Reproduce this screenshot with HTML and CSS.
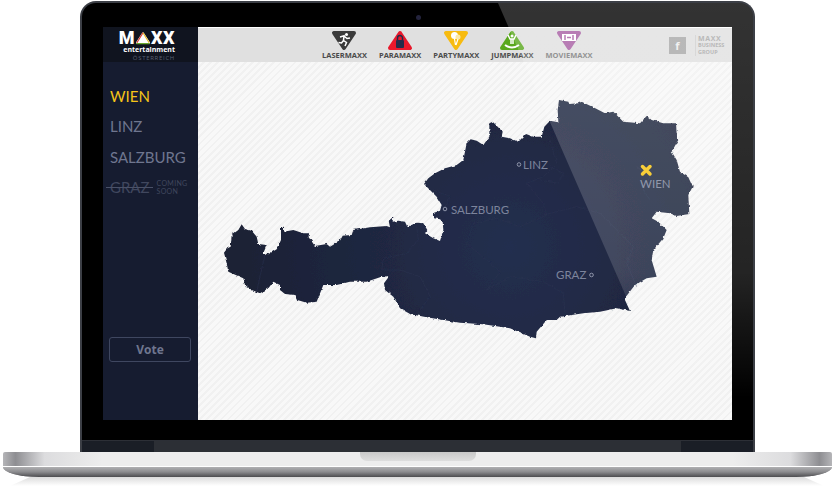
FILE: index.html
```html
<!DOCTYPE html>
<html lang="en">
<head>
    <meta charset="UTF-8">
    <title>MAXX entertainment</title>
    <link rel="stylesheet" href="styles.css">
</head>
<body>
    <div class="lid">
        <span class="camera"></span>
        <div class="screen">
            <aside class="sidebar">
                <div class="logo">
                    <div class="logo-mark">
                        <span>M</span>
                        <svg width="16" height="14" viewBox="0 0 17 14">
                            <polygon points="8.5,2 15,12 2,12" fill="#fff" stroke="#fff" stroke-width="2" stroke-linejoin="round"/>
                            <path d="M2 12 L8.5 1.5" stroke="#d8342c" stroke-width="1.2" fill="none"/>
                            <path d="M8.5 1.5 L15 12" stroke="#e8b820" stroke-width="1.2" fill="none"/>
                            <path d="M1.5 13 H15.5" stroke="#6aa82c" stroke-width="1.2" fill="none"/>
                        </svg>
                        <span>XX</span>
                    </div>
                    <div class="logo-sub">entertainment</div>
                    <div class="logo-country">ÖSTERREICH</div>
                </div>
                <ul class="cities">
                    <li class="city active">WIEN</li>
                    <li class="city">LINZ</li>
                    <li class="city">SALZBURG</li>
                    <li class="city soon">
                        <span class="struck">GRAZ</span>
                        <span class="soon-note">COMING<br>SOON</span>
                    </li>
                </ul>
                <button class="vote">Vote</button>
            </aside>
            <div class="content">
                <header class="topbar">
                    <nav class="brands">
                        <a class="brand">
                            <svg width="26" height="21" viewBox="0 0 26 21">
                                <polygon points="3,3 23,3 13,18" fill="#3b3b3b" stroke="#3b3b3b" stroke-width="4" stroke-linejoin="round"/>
                                <circle cx="15.5" cy="4.5" r="1.5" fill="#fff"/>
                                <path d="M9 7 L13 5.8 L12.5 10.5 L15.5 12.5 L14 16 M12.5 10.5 L10.5 13 L7.5 12.5 M13 6 L16 8.5 L19 8" stroke="#fff" stroke-width="1.5" fill="none"/>
                            </svg>
                            <span>LASERMAXX</span>
                        </a>
                        <a class="brand">
                            <svg width="26" height="21" viewBox="0 0 26 21">
                                <polygon points="13,3 23,18 3,18" fill="#e8192c" stroke="#e8192c" stroke-width="4" stroke-linejoin="round"/>
                                <rect x="9" y="10" width="8" height="8" rx="1" fill="#252c4a"/>
                                <path d="M10.5 10 V8 a2.5 2.5 0 0 1 5 0 V10" stroke="#252c4a" stroke-width="1.5" fill="none"/>
                            </svg>
                            <span>PARAMAXX</span>
                        </a>
                        <a class="brand">
                            <svg width="26" height="21" viewBox="0 0 26 21">
                                <polygon points="3,3 23,3 13,18" fill="#f7bb10" stroke="#f7bb10" stroke-width="4" stroke-linejoin="round"/>
                                <circle cx="11.5" cy="5.5" r="3.5" fill="#fff"/>
                                <circle cx="15" cy="7" r="2.5" fill="#fbe9a8"/>
                                <path d="M11.5 9 L12.5 15 M15 9 L13 15" stroke="#fff" stroke-width="1.2" fill="none"/>
                            </svg>
                            <span>PARTYMAXX</span>
                        </a>
                        <a class="brand">
                            <svg width="26" height="21" viewBox="0 0 26 21">
                                <polygon points="13,3 23,18 3,18" fill="#5aa81e" stroke="#5aa81e" stroke-width="4" stroke-linejoin="round"/>
                                <circle cx="13" cy="6" r="1.5" fill="#fff"/>
                                <path d="M9 5 L11 9 H15 L17 5 M12 9 V14 M14 9 V14" stroke="#fff" stroke-width="1.5" fill="none"/>
                                <path d="M6 15 Q13 20 20 15" stroke="#fff" stroke-width="2" fill="none"/>
                            </svg>
                            <span>JUMPMAXX</span>
                        </a>
                        <a class="brand faded">
                            <svg width="26" height="21" viewBox="0 0 26 21">
                                <polygon points="3,3 23,3 13,18" fill="#a75ea3" stroke="#a75ea3" stroke-width="4" stroke-linejoin="round"/>
                                <rect x="6" y="4" width="14" height="7" fill="#fff"/>
                                <path d="M9 5 V10 M17 5 V10 M11 7.5 H15" stroke="#a75ea3" stroke-width="1.5" fill="none"/>
                            </svg>
                            <span>MOVIEMAXX</span>
                        </a>
                    </nav>
                    <div class="social">f</div>
                    <div class="group">
                        <div class="group-name">MAXX</div>
                        <div>BUSINESS</div>
                        <div>GROUP</div>
                    </div>
                </header>
                <main class="map-area">
                    <svg class="map" width="534" height="358" viewBox="198 62 534 358">
                        <defs>
                            <radialGradient id="land" gradientUnits="userSpaceOnUse" cx="900" cy="470" r="850">
                                <stop offset="0" stop-color="#242f4f"/>
                                <stop offset=".5" stop-color="#1f2740"/>
                                <stop offset="1" stop-color="#1a2034"/>
                            </radialGradient>
                            <filter id="rough" x="-5%" y="-5%" width="110%" height="110%">
                                <feTurbulence type="fractalNoise" baseFrequency=".09" numOctaves="2" seed="4"/>
                                <feDisplacementMap in="SourceGraphic" scale="9" xChannelSelector="R" yChannelSelector="G"/>
                            </filter>
                        </defs>
                        <g transform="translate(210 90) scale(.33333)">
                            <path filter="url(#rough)" fill="url(#land)" d="M42 488 L52 475 62 470 65 435 85 420 95 403 105 417 125 422 140 440 145 462 170 465 160 490 175 493 200 478 213 450 213 412 222 410 222 425 250 420 280 430 298 430 295 440 315 468 350 462 360 470 385 455 395 437 425 435 430 420 480 412 530 408 540 412 536 392 550 380 548 395 565 392 585 395 592 410 620 398 640 400 652 420 645 430 670 445 690 453 700 420 698 395 690 388 672 385 672 368 690 362 695 345 680 320 660 300 642 282 655 265 675 250 705 235 730 228 740 225 760 210 770 160 782 148 800 152 820 165 838 140 838 100 848 95 878 125 875 140 900 145 925 155 948 132 970 140 995 140 1003 110 1020 92 1045 97 1043 60 1047 30 1075 35 1078 42 1105 40 1115 35 1150 52 1185 70 1210 65 1240 95 1290 100 1310 78 1325 90 1360 100 1398 100 1400 130 1405 150 1385 185 1400 210 1410 245 1435 262 1448 290 1435 315 1438 372 1400 378 1380 370 1340 365 1325 385 1345 395 1370 420 1360 445 1330 480 1325 510 1340 560 1310 565 1275 585 1250 617 1245 630 1260 663 1220 655 1170 665 1120 670 1050 680 1040 690 1010 690 980 725 978 745 960 740 900 715 820 703 750 698 700 690 650 682 600 672 570 655 550 620 525 600 522 580 538 558 510 562 470 575 420 575 380 585 340 585 320 635 290 638 262 630 255 615 225 612 210 600 210 585 190 575 175 595 150 610 125 600 105 585 100 565 65 550 55 545 50 520 Z"/>
                            <path filter="url(#rough)" fill="none" stroke="#2a3350" stroke-width="1.500" d="M165 495 L150 560 140 605 M620 410 L625 450 590 490 520 505 515 540 570 540 630 560 660 620 630 660 M670 300 L720 320 700 370 M1020 150 L1040 220 1000 260 950 280 1000 340 1010 375 930 410 860 385 790 400 770 460 830 510 870 545 830 600 900 560 1000 575 1060 610 1065 670 M1000 375 L1100 350 1170 370 1240 440 1270 470 1250 520 1280 590 M1280 230 L1320 260 1300 300 1320 330 M1020 230 L1060 250 1045 280 990 270"/>
                        </g>
                        <circle class="pin" cx="519" cy="164.500" r="1.800"/>
                        <text class="place" x="523" y="169">LINZ</text>
                        <circle class="pin" cx="445" cy="209" r="1.800"/>
                        <text class="place" x="451" y="214">SALZBURG</text>
                        <text class="place" x="556" y="279">GRAZ</text>
                        <circle class="pin" cx="591.500" cy="275" r="1.800"/>
                        <path d="M642.500 166.500 L650 174 M650 166.500 L642.500 174" stroke="#f7c512" stroke-width="3.500" stroke-linecap="round"/>
                        <text class="place" x="640" y="187.500">WIEN</text>
                    </svg>
                </main>
            </div>
        </div>
        <div class="chin"><div class="hinge"></div></div>
        <div class="glare"></div>
    </div>
    <div class="base">
        <div class="notch"></div>
        <div class="base-front"></div>
    </div>
    <div class="reflection"></div>
</body>
</html>
```

FILE: styles.css
```css
body {
    margin: 0;
    background: #fff;
    width: 832px;
    height: 486px;
    overflow: hidden;
    font-family: "Lato", sans-serif;
}

/* laptop lid */
.lid {
    position: relative;
    box-sizing: border-box;
    width: 675px;
    height: 451px;
    margin: 1px 0 0 80px;
    padding-top: 24px;
    background: #000;
    border: 2px solid #3c3f46;
    border-bottom: 0;
    border-radius: 16px 16px 0 0;
    display: flex;
    flex-direction: column;
    align-items: center;
    overflow: hidden;
}

.camera {
    position: absolute;
    top: 12px;
    left: 334px;
    width: 5px;
    height: 5px;
    border-radius: 50%;
    background: #23233c;
}

.screen {
    display: flex;
    width: 629px;
    height: 393px;
    background: #f5f5f5;
}

.chin {
    margin-top: 20px;
    flex: 1;
    width: 100%;
    background: #1a1e26;
    border-top: 1px solid #2c2f36;
}

.hinge {
    height: 100%;
    margin: 0 72px;
    background: #2c2f35;
}

.glare {
    position: absolute;
    inset: 0;
    clip-path: polygon(416px 0, 100% 0, 100% 100%, 612px 100%);
    background: linear-gradient(to bottom, rgba(255,255,255,.2), rgba(255,255,255,.14) 60%, rgba(255,255,255,0) 88%);
    pointer-events: none;
}

/* sidebar */
.sidebar {
    width: 95px;
    display: flex;
    flex-direction: column;
    background: #161c30;
}

.logo {
    height: 35px;
    background: #10141f;
    display: flex;
    flex-direction: column;
    align-items: flex-end;
    padding-right: 23px;
    color: #fff;
}

.logo-mark {
    display: flex;
    align-items: center;
    height: 17px;
    margin-top: 2px;
    font: 900 18px/17px "Roboto", sans-serif;
    letter-spacing: .5px;
}

.logo-sub {
    font: 700 7px/8px "Open Sans", sans-serif;
    margin-top: 0;
}

.logo-country {
    font: 400 6px/8px "Open Sans", sans-serif;
    color: #596073;
    letter-spacing: .7px;
}

.cities {
    list-style: none;
    margin: 19px 0 0;
    padding: 0 0 0 7px;
    flex: 1;
}

.city {
    height: 30.300px;
    line-height: 30px;
    font-size: 15px;
    color: #6f768f;
    white-space: nowrap;
}

.city.active {
    color: #f5c518;
}

.soon {
    display: flex;
    align-items: center;
    gap: 7px;
    color: #40475e;
}

.struck {
    position: relative;
}

.struck::after {
    content: "";
    position: absolute;
    left: -4px;
    right: -3px;
    top: 15px;
    height: 1px;
    background: #4a5168;
}

.soon-note {
    font-size: 7px;
    line-height: 8px;
    letter-spacing: .3px;
}

.vote {
    width: 82px;
    height: 25px;
    margin: 0 0 58px 6px;
    background: transparent;
    border: 1px solid #3f4760;
    border-radius: 3px;
    color: #6f768f;
    font: 700 12px "Open Sans", sans-serif;
}

/* top bar */
.content {
    flex: 1;
    display: flex;
    flex-direction: column;
}

.topbar {
    height: 35px;
    box-sizing: border-box;
    border-top: 1px solid #fff;
    background: #e0e0e0;
    display: flex;
    align-items: center;
    padding-left: 124px;
}

.brands {
    display: flex;
    gap: 12px;
    width: 347px;
}

.brand {
    display: flex;
    flex-direction: column;
    align-items: center;
    font: 700 7.500px/9px "Open Sans", sans-serif;
    color: #4a4a4a;
    white-space: nowrap;
}

.brand svg {
    display: block;
}

.brand.faded {
    color: #7a7a7a;
}

.social {
    width: 17px;
    height: 17px;
    background: #a8a8a8;
    color: #eee;
    font: 700 11px/17px "Open Sans", sans-serif;
    text-align: center;
    margin-right: 9px;
}

.group {
    border-left: 1px solid #cfcfcf;
    padding-left: 2px;
    font: 700 5.500px/7px "Open Sans", sans-serif;
    color: #a8a8a8;
}

.group-name {
    font-size: 7px;
    letter-spacing: .6px;
}

/* map */
.map-area {
    flex: 1;
    background: repeating-linear-gradient(135deg, #f8f8f8 0, #f8f8f8 3px, #f1f1f1 3px, #f1f1f1 5px);
}

.map {
    display: block;
}

.place {
    font-family: "Lato", sans-serif;
    font-size: 11.500px;
    fill: #7d849c;
}

.pin {
    fill: none;
    stroke: #8f95aa;
    stroke-width: 1;
}

/* laptop base */
.base {
    position: relative;
    margin: 0 0 0 3px;
    width: 829px;
    height: 25px;
    display: flex;
    flex-direction: column;
    justify-content: flex-end;
    background: linear-gradient(to right, #b5b5b8 0, #8e8e92 1.500%, #dcdcde 5%, #ededed 12%, #ededed 88%, #dcdcde 95%, #8e8e92 98.500%, #b5b5b8 100%);
    border-radius: 2px 2px 36px 36px / 2px 2px 10px 10px;
    overflow: hidden;
}

.notch {
    position: absolute;
    top: 0;
    left: 357px;
    width: 116px;
    height: 9px;
    background: linear-gradient(#c8c8c8, #dedede);
    border-radius: 0 0 7px 7px;
}

.base-front {
    height: 10px;
    border-top: 1px solid #fff;
    background: linear-gradient(#b0b0b2, #8b8b8e 50%, #4c4c4f);
}

.reflection {
    height: 9px;
    margin: 0 8px 0 10px;
    background: linear-gradient(#dcdcdc, #fff);
    clip-path: polygon(20px 0, calc(100% - 20px) 0, 100% 100%, 0 100%);
}
```
